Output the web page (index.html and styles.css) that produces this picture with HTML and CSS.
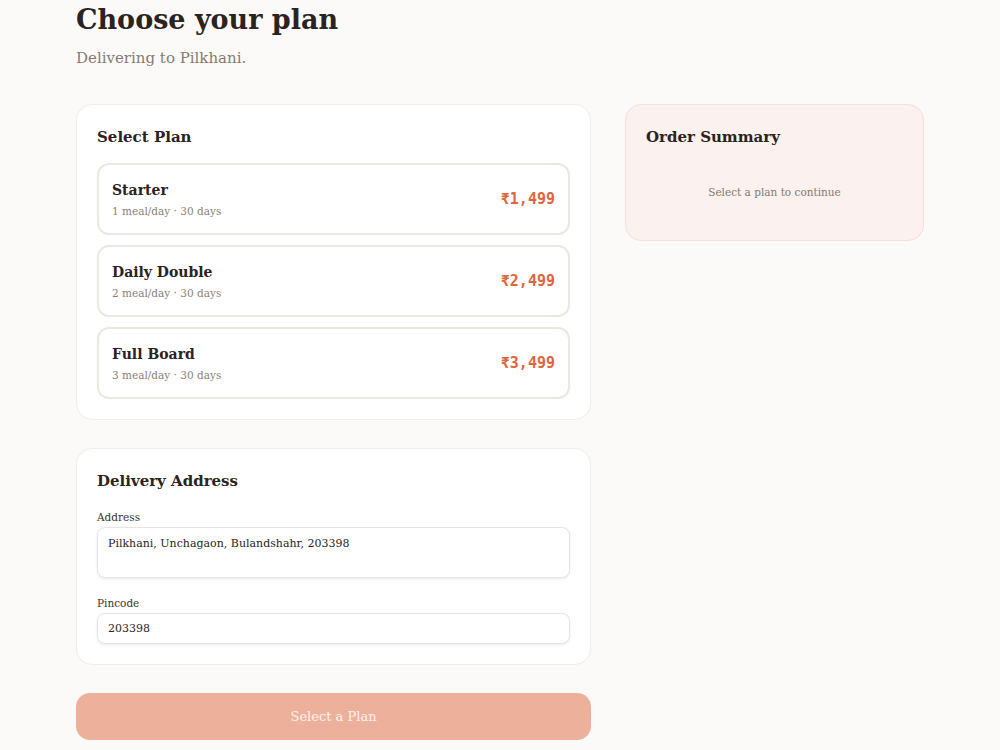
FILE: index.html
```html
<!DOCTYPE html>
<html lang="en">
<head>
    <meta charset="UTF-8">
    <meta name="viewport" content="width=device-width, initial-scale=1.0">
    <title>Choose your plan</title>
    <link rel="stylesheet" href="styles.css">
</head>
<body>

<div class="page">
    <h1 class="title">Choose your plan</h1>
    <p class="subtitle">Delivering to Pilkhani.</p>

    <div class="layout">
        <div class="main">
            <div class="card">
                <h2>Select Plan</h2>
                <div class="plans">
                    <div class="plan">
                        <div>
                            <div class="plan-name">Starter</div>
                            <div class="plan-meta">1 meal/day · 30 days</div>
                        </div>
                        <div class="plan-price">₹1,499</div>
                    </div>
                    <div class="plan">
                        <div>
                            <div class="plan-name">Daily Double</div>
                            <div class="plan-meta">2 meal/day · 30 days</div>
                        </div>
                        <div class="plan-price">₹2,499</div>
                    </div>
                    <div class="plan">
                        <div>
                            <div class="plan-name">Full Board</div>
                            <div class="plan-meta">3 meal/day · 30 days</div>
                        </div>
                        <div class="plan-price">₹3,499</div>
                    </div>
                </div>
            </div>

            <div class="card">
                <h2>Delivery Address</h2>
                <label for="address">Address</label>
                <textarea id="address" rows="2">Pilkhani, Unchagaon, Bulandshahr, 203398</textarea>
                <label for="pincode">Pincode</label>
                <input type="text" id="pincode" value="203398">
            </div>

            <button class="submit" disabled>Select a Plan</button>
        </div>

        <div class="summary">
            <h2>Order Summary</h2>
            <p class="empty">Select a plan to continue</p>
        </div>
    </div>
</div>

</body>
</html>
```

FILE: styles.css
```css
body {
    font-family: Georgia, "DejaVu Serif", serif;
    background-color: #fcfaf8;
    color: #2a2320;
    margin: 0;
}
.page {
    max-width: 848px;
    margin: 0 auto;
    padding: 0 0 10px;
}
.title {
    font-size: 27px;
    margin: 0;
    padding-top: 2px;
    line-height: 36px;
}
.subtitle {
    font-size: 15px;
    line-height: 20px;
    color: #857a70;
    margin: 10px 0 36px;
}
.layout {
    display: grid;
    grid-template-columns: 1fr 299px;
    gap: 34px;
    align-items: start;
}
.main {
    display: flex;
    flex-direction: column;
    gap: 28px;
}
.card {
    background: #fff;
    border: 1px solid #f0ece7;
    border-radius: 16px;
    padding: 20px;
    display: flex;
    flex-direction: column;
}
h2 {
    font-size: 15px;
    margin: 0 0 14px;
    line-height: 24px;
}
.plans {
    display: flex;
    flex-direction: column;
    gap: 10px;
}
.plan {
    display: flex;
    justify-content: space-between;
    align-items: center;
    border: 2px solid #ebe7e1;
    border-radius: 12px;
    padding: 0 13px;
    height: 72px;
    box-sizing: border-box;
}
.plan-name {
    font-size: 14px;
    line-height: 18px;
    font-weight: bold;
}
.plan-meta {
    font-size: 10.5px;
    line-height: 14px;
    color: #8a7f76;
    margin-top: 5px;
}
.plan-price {
    font-family: "DejaVu Sans Mono", monospace;
    font-weight: bold;
    font-size: 15px;
    color: #e0653a;
}
label {
    font-size: 10.5px;
    line-height: 14px;
    color: #3a322d;
    margin: 3px 0 3px;
}
textarea, input {
    font-family: inherit;
    font-size: 11px;
    line-height: 14px;
    color: #2a2320;
    border: 1px solid #e8e4df;
    border-radius: 8px;
    box-shadow: 0 1px 3px rgba(0, 0, 0, 0.08);
    padding: 9px 10px;
    resize: none;
    outline: none;
}
textarea {
    height: 51px;
    box-sizing: border-box;
    margin-bottom: 15px;
}
input {
    height: 31px;
    padding: 0 10px;
    box-sizing: border-box;
}
.submit {
    font-family: inherit;
    font-size: 13px;
    background: #edb09b;
    color: #fdf0ea;
    border: none;
    border-radius: 14px;
    height: 47px;
}
.summary {
    background: #fbf1ee;
    border: 1px solid #f6e0d8;
    border-radius: 16px;
    padding: 20px 20px 41px;
}
.empty {
    text-align: center;
    font-size: 10.5px;
    line-height: 14px;
    color: #857a70;
    margin: 36px 0 0;
}
```
